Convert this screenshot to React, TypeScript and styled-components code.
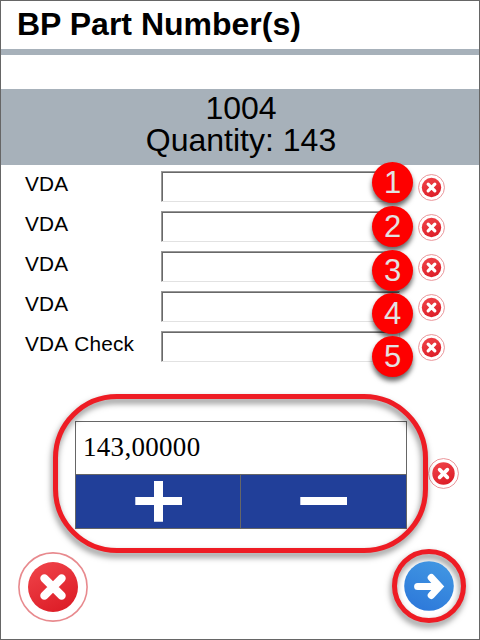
import React from "react";
import styled, { createGlobalStyle } from "styled-components";

const GlobalStyle = createGlobalStyle`
  body { margin: 0; background: #fff; }
  *, *::before, *::after { box-sizing: border-box; }
`;

const Screen = styled.main`
  position: relative;
  display: flex;
  flex-direction: column;
  width: 480px;
  height: 640px;
  overflow: hidden;
  border: 1px solid #666;
  background: #fff;
  color: #000;
  font-family: "Liberation Sans", Arial, sans-serif;
`;

const Title = styled.h1`
  margin: 0;
  height: 54px;
  padding-left: 16px;
  border-bottom: 6px solid #a7b1ba;
  font-size: 32px;
  font-weight: 700;
  line-height: 46px;
  white-space: nowrap;
`;

const Summary = styled.section`
  height: 76px;
  margin-top: 34px;
  padding: 3px 0 0 2px;
  background: #a7b1ba;
  font-size: 32px;
  line-height: 32px;
  text-align: center;
`;

const SummaryLine = styled.div``;

const Fields = styled.section`
  display: flex;
  flex-direction: column;
  padding: 6px 0 0 24px;
`;

const FieldRow = styled.div`
  display: grid;
  grid-template-columns: 136px 239px 45px;
  height: 40px;
  align-items: start;
`;

const FieldLabel = styled.label`
  font-size: 20.8px;
  line-height: 25px;
  word-spacing: 1px;
  letter-spacing: 0.2px;
  white-space: nowrap;
`;

const FieldInput = styled.input`
  width: 100%;
  height: 31px;
  padding: 1px 4px;
  border-style: solid;
  border-width: 1px;
  border-color: #999 #e2e2e2 #e2e2e2 #999;
  border-radius: 0;
  outline: none;
  background: #fff;
  box-shadow: inset 1px 1px 0 #696969;
  font: 20px "Liberation Sans", sans-serif;
`;

const IconButton = styled.button<{ $size: number }>`
  display: block;
  width: ${(p) => p.$size}px;
  height: ${(p) => p.$size}px;
  padding: 0;
  border: 0;
  background: none;
  svg { display: block; width: 100%; height: 100%; }
`;

const RowClear = styled(IconButton)`
  margin: 3px 0 0 18px;
`;

const CancelButton = styled(IconButton)`
  margin-top: 2px;
`;

const Badge = styled.span<{ $top: number }>`
  position: absolute;
  left: 371px;
  top: ${(p) => p.$top}px;
  width: 41px;
  height: 41px;
  border-radius: 50%;
  background: #fe0000;
  color: #e2e2e2;
  font-size: 31px;
  line-height: 41px;
  text-align: center;
  box-shadow: 0 4px 5px rgba(0, 0, 0, 0.6);
`;

const QuantityRow = styled.section`
  display: flex;
  align-items: center;
  height: 108px;
  margin: 50px 0 0 74px;
`;

const Stepper = styled.div`
  width: 332px;
  height: 108px;
  border: 1px solid #666;
  background: #fff;
`;

const Amount = styled.div`
  height: 53px;
  padding-left: 7px;
  border-bottom: 1px solid #666;
  font: 27px/50px "Liberation Serif", "Times New Roman", serif;
  letter-spacing: 0.3px;
`;

const StepButtons = styled.div`
  display: grid;
  grid-template-columns: 164px 166px;
  height: 53px;
`;

const StepButton = styled.button`
  padding: 0;
  border: 0;
  background: #213f99;
  & + & { border-left: 1px solid #666; }
  svg { display: block; width: 100%; height: 53px; }
`;

const QuantityClear = styled(IconButton)`
  margin: -4px 0 0 21px;
`;

const QuantityHighlight = styled.div`
  position: absolute;
  left: 52px;
  top: 393px;
  width: 375px;
  height: 159px;
  border: 5px solid #ee1c24;
  border-radius: 64px;
  filter: drop-shadow(-1px 4px 3px rgba(0, 0, 0, 0.5));
  pointer-events: none;
`;

const Actions = styled.footer`
  display: flex;
  justify-content: space-between;
  align-items: center;
  margin-top: 20px;
  padding: 0 13px 0 17px;
`;

const NextButton = styled.button`
  position: relative;
  width: 74px;
  height: 74px;
  padding: 12px;
  border: 0;
  border-radius: 50%;
  background: none;
  svg { position: relative; z-index: 1; display: block; width: 50px; height: 50px; }
  &::before {
    content: "";
    position: absolute;
    inset: 0;
    border: 5px solid #ee1c24;
    border-radius: 50%;
    filter: drop-shadow(-1px 4px 3px rgba(0, 0, 0, 0.5));
  }
`;

function CrossIcon({ size, inner, ring }: { size: number; inner: number; ring: number }) {
  const id = React.useId();
  const c = size / 2;
  const arm = inner * 0.345;
  return (
    <svg viewBox={`0 0 ${size} ${size}`} aria-hidden="true">
      <defs>
        <linearGradient id={id} x1="0.25" y1="0" x2="0.75" y2="1">
          <stop offset="0" stopColor="#ef4248" />
          <stop offset="1" stopColor="#dc1c26" />
        </linearGradient>
      </defs>
      <circle cx={c} cy={c} r={c - ring / 2 - 0.1} fill="#fff" stroke="#e88a8e" strokeWidth={ring} />
      <circle cx={c} cy={c} r={inner} fill={`url(#${id})`} />
      <path
        d={`M${c - arm} ${c - arm}L${c + arm} ${c + arm}M${c + arm} ${c - arm}L${c - arm} ${c + arm}`}
        stroke="#fff"
        strokeWidth={inner * 0.33}
        strokeLinecap="round"
      />
    </svg>
  );
}

function ArrowIcon() {
  return (
    <svg viewBox="0 0 50 50" aria-hidden="true">
      <defs>
        <linearGradient id="next-fill" x1="0.7" y1="0" x2="0.3" y2="1">
          <stop offset="0" stopColor="#4196e2" />
          <stop offset="1" stopColor="#2d79da" />
        </linearGradient>
      </defs>
      <circle cx="25" cy="25" r="24.8" fill="url(#next-fill)" />
      <path
        d="M13.7 25.5H33M27.3 16.6L35.4 25.5L27.3 34.4"
        fill="none"
        stroke="#fff"
        strokeWidth="7.2"
        strokeLinecap="round"
        strokeLinejoin="miter"
      />
    </svg>
  );
}

const fields = ["VDA", "VDA", "VDA", "VDA", "VDA Check"];
const badgeTops = [161, 205, 249, 292, 335];

export default function App() {
  return (
    <>
      <GlobalStyle />
      <Screen>
        <Title>BP Part Number(s)</Title>
        <Summary>
          <SummaryLine>1004</SummaryLine>
          <SummaryLine>Quantity: 143</SummaryLine>
        </Summary>
        <Fields>
          {fields.map((label, i) => (
            <FieldRow key={i}>
              <FieldLabel htmlFor={`field-${i}`}>{label}</FieldLabel>
              <FieldInput id={`field-${i}`} />
              <RowClear $size={27} aria-label="Clear">
                <CrossIcon size={27} inner={9.7} ring={0.9} />
              </RowClear>
            </FieldRow>
          ))}
        </Fields>
        <QuantityRow>
          <Stepper>
            <Amount>143,00000</Amount>
            <StepButtons>
              <StepButton aria-label="Increase">
                <svg viewBox="0 0 164 53"><path d="M59.3 22H78V6H87V22H106V30H87V46.7H78V30H59.3Z" fill="#fff" /></svg>
              </StepButton>
              <StepButton aria-label="Decrease">
                <svg viewBox="0 0 165 53"><path d="M59.3 22H106V30H59.3Z" fill="#fff" /></svg>
              </StepButton>
            </StepButtons>
          </Stepper>
          <QuantityClear $size={31} aria-label="Clear quantity">
            <CrossIcon size={31} inner={11.2} ring={0.9} />
          </QuantityClear>
        </QuantityRow>
        <Actions>
          <CancelButton $size={70} aria-label="Cancel">
            <CrossIcon size={70} inner={25} ring={1.6} />
          </CancelButton>
          <NextButton aria-label="Next"><ArrowIcon /></NextButton>
        </Actions>
        {badgeTops.map((top, i) => (
          <Badge key={top} $top={top}>{i + 1}</Badge>
        ))}
        <QuantityHighlight />
      </Screen>
    </>
  );
}
